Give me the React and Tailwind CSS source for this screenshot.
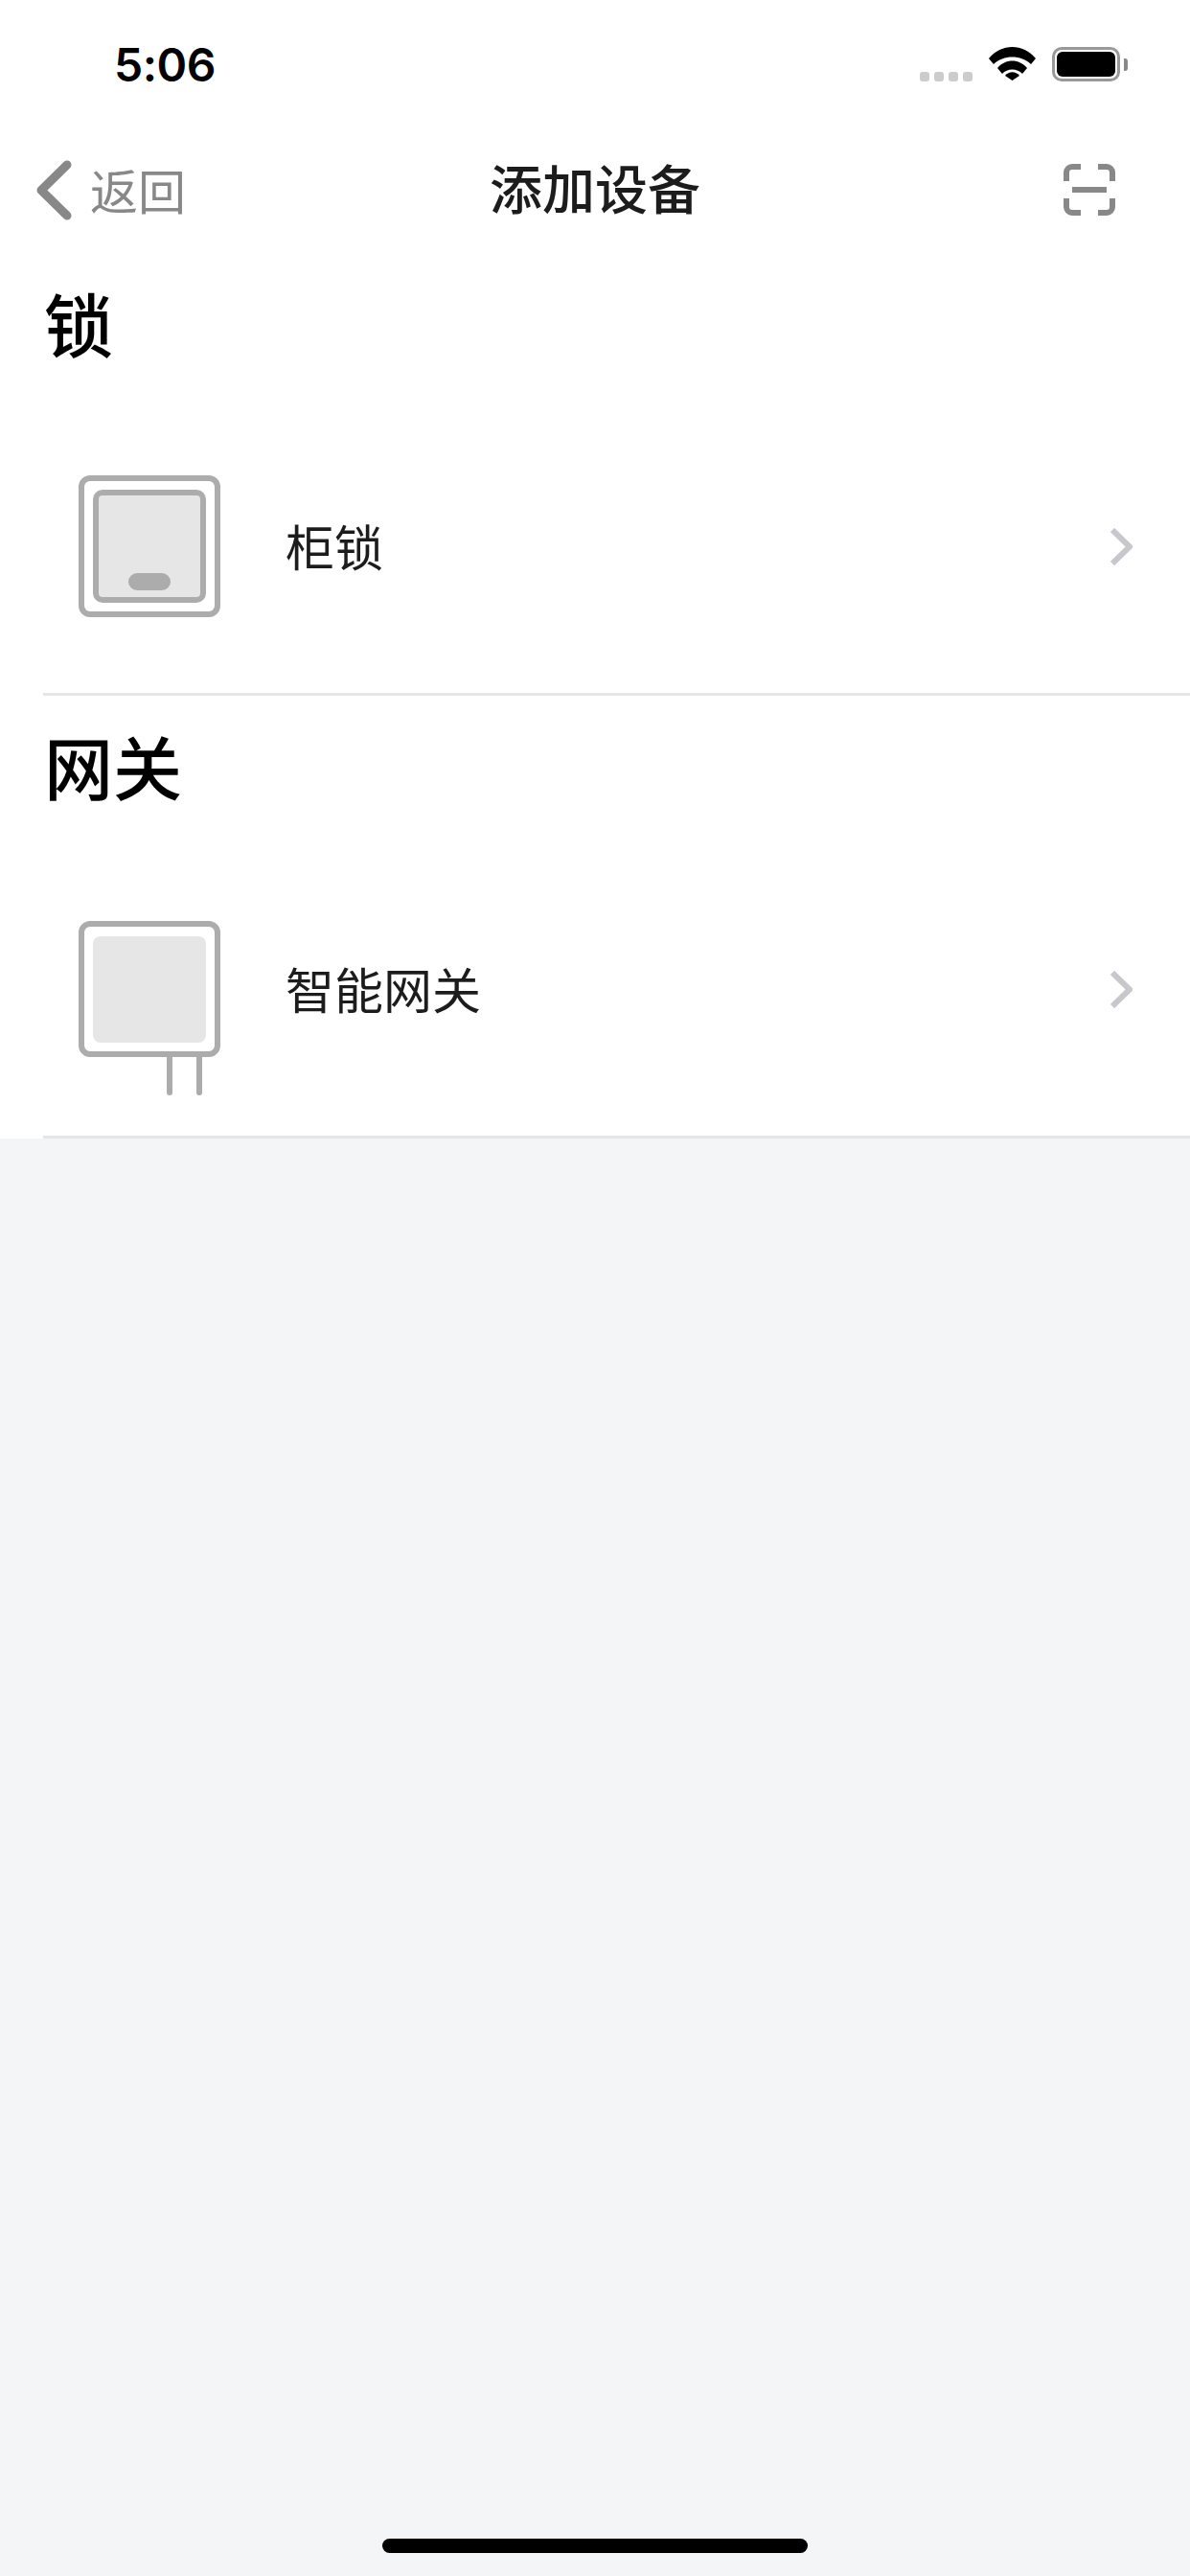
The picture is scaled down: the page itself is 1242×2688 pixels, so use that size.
const FONT = 'font-["Noto_Sans_CJK_SC",sans-serif]'

function StatusBar() {
  return (
    <div className="flex h-[132px] items-start justify-between bg-white pt-[49px] pl-[119px] pr-[65px]">
      <span className='font-["Inter",sans-serif] text-[48px] leading-[37px] font-semibold tracking-[-0.5px] text-black'>5:06</span>
      <div className="flex items-start">
        <div className="mt-[26px] flex gap-[5px]">
          {[0, 1, 2, 3].map(i => (
            <div key={i} className="h-[10px] w-[10px] rounded-[3px] bg-[#cccccc]" />
          ))}
        </div>
        <svg className="ml-[17px]" width="49" height="36" viewBox="0 0 49 36">
          <path d="M0 12 L5 18 C15 8 34 8 44 18 L49 12 C36 -4 13 -4 0 12 Z" fill="#000" />
          <path d="M9 22 L14 28 C19 22 30 22 35 28 L40 22 C32 12 17 12 9 22 Z" fill="#000" />
          <path d="M17 31 L24.5 36 L32 31 C28 26 21 26 17 31 Z" transform="translate(0 -1)" fill="#000" />
        </svg>
        <div className="ml-[17px] flex items-center">
          <div className="h-[36px] w-[71px] rounded-[10px] border-[3px] border-[#999999] p-[2px]">
            <div className="h-full w-full rounded-[6px] bg-black" />
          </div>
          <div className="ml-[4px] h-[13px] w-[4px] rounded-r-[3px] bg-[#888888]" />
        </div>
      </div>
    </div>
  )
}

function NavBar() {
  return (
    <div className="relative flex h-[132px] items-center justify-between bg-white pl-[38px] pr-[78px]">
      <div className="flex items-center">
        <svg width="37" height="63" viewBox="0 0 37 63">
          <path d="M32 5 L5 31.5 L32 58" fill="none" stroke="#888888" strokeWidth="9" strokeLinecap="round" strokeLinejoin="round" />
        </svg>
        <span className="ml-[19px] -mt-[3px] text-[50px] leading-[60px] text-[#888888]">返回</span>
      </div>
      <span className="absolute left-0 right-0 -mt-[8px] text-center text-[55px] leading-[70px] font-medium text-[#1c1c1c]">添加设备</span>
      <svg width="54" height="54" viewBox="0 0 54 54" fill="none" stroke="#888888" strokeWidth="6">
        <path d="M18 3 H9 A6 6 0 0 0 3 9 V18" />
        <path d="M36 3 H45 A6 6 0 0 1 51 9 V18" />
        <path d="M18 51 H9 A6 6 0 0 1 3 45 V36" />
        <path d="M36 51 H45 A6 6 0 0 0 51 45 V36" />
        <path d="M9 27 H45" />
      </svg>
    </div>
  )
}

function LockIcon() {
  return (
    <div className="flex h-[148px] w-[148px] items-center justify-center rounded-[12px] border-[6px] border-[#acacac] bg-white">
      <div className="flex h-[118px] w-[118px] items-end justify-center rounded-[10px] border-[6px] border-[#acacac] bg-[#e6e6e6] pb-[7px]">
        <div className="h-[18px] w-[44px] rounded-full bg-[#acacac]" />
      </div>
    </div>
  )
}

function GatewayIcon() {
  return (
    <div className="relative flex h-[142px] w-[148px] items-center justify-center rounded-[12px] border-[6px] border-[#acacac] bg-white">
      <div className="h-[111px] w-[118px] rounded-[8px] bg-[#e6e6e6]" />
      <div className="absolute left-[86px] top-[136px] flex gap-[25px]">
        <div className="h-[40px] w-[6px] rounded-b-[3px] bg-[#acacac]" />
        <div className="h-[40px] w-[6px] rounded-b-[3px] bg-[#acacac]" />
      </div>
    </div>
  )
}

function Section({ title, name, icon, headerClass, rowClass, nameClass, lineColor }) {
  return (
    <div className="bg-white">
      <div className={`pl-[46px] text-[72px] leading-[72px] font-medium text-black ${headerClass}`}>
        {title}
      </div>
      <div className={`flex items-center pl-[82px] pr-[60px] ${rowClass}`}>
        {icon}
        <span className={`ml-[68px] text-[51px] leading-[66px] text-[#1c1c1c] ${nameClass}`}>{name}</span>
        <svg className="ml-auto" width="23" height="39" viewBox="0 0 23 39">
          <path d="M2 2 L20 19.5 L2 37" fill="none" stroke="#c7c7cc" strokeWidth="6" />
        </svg>
      </div>
      <div className={`ml-[45px] h-[3px] ${lineColor}`} />
    </div>
  )
}

export default function App() {
  return (
    <div lang="zh-CN" className={`flex h-[2688px] w-[1242px] flex-col overflow-hidden bg-[#f4f5f7] ${FONT}`}>
      <StatusBar />
      <NavBar />
      <div className="h-[36px] bg-white" />
      <Section
        title="锁"
        name="柜锁"
        icon={<LockIcon />}
        headerClass="h-[104px]"
        rowClass="pt-[92px] pb-[79px]"
        nameClass="-mt-[3px]"
        lineColor="bg-[#e5e5e5]"
      />
      <Section
        title="网关"
        name="智能网关"
        icon={<GatewayIcon />}
        headerClass="h-[136px] pt-[36px]"
        rowClass="pt-[99px] pb-[82px]"
        nameClass="-mt-[2px]"
        lineColor="bg-[#e4e5e8]"
      />
      <div className="mt-auto mb-[24px] h-[15px] w-[444px] self-center rounded-[8px] bg-black" />
    </div>
  )
}
